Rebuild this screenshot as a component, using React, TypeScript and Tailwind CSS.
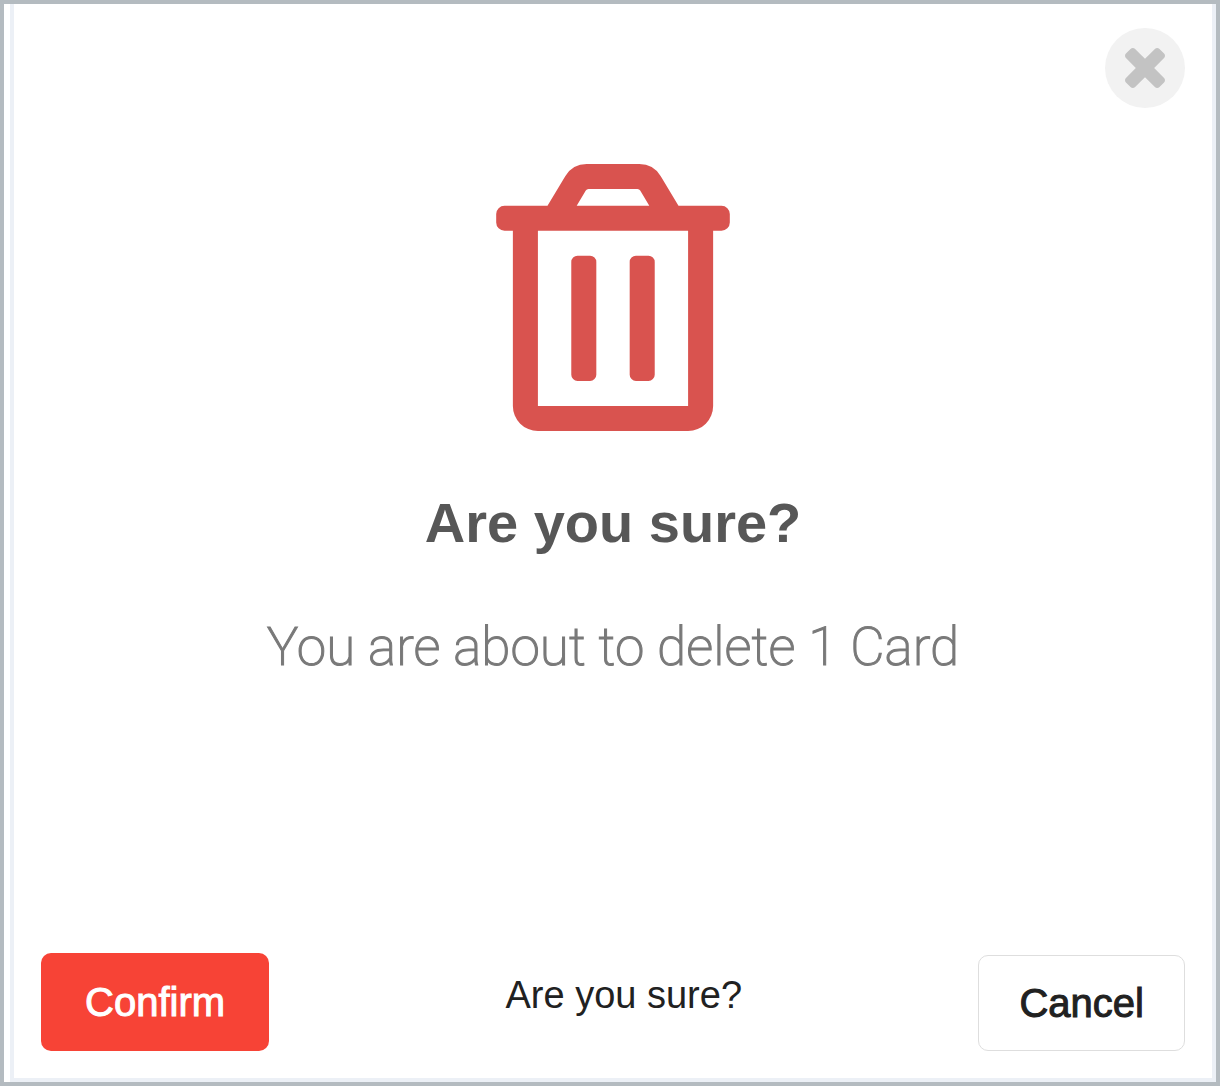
import { useState } from 'react';
import { FaRegTrashAlt } from 'react-icons/fa';

interface ConfirmDeleteProps {
  count: number;
  itemName: string;
  onConfirm: () => void;
  onCancel: () => void;
}

function CloseIcon() {
  return (
    <svg viewBox="302 366 1188 1188" className="size-10 fill-[#c3c3c3]" aria-hidden="true">
      <path d="M1490 1322q0 40-28 68l-136 136q-28 28-68 28t-68-28l-294-294-294 294q-28 28-68 28t-68-28l-136-136q-28-28-28-68t28-68l294-294-294-294q-28-28-28-68t28-68l136-136q28-28 68-28t68 28l294 294 294-294q28-28 68-28t68 28l136 136q28 28 28 68t-28 68l-294 294 294 294q28 28 28 68z" />
    </svg>
  );
}

function ConfirmDelete({ count, itemName, onConfirm, onCancel }: ConfirmDeleteProps) {
  return (
    <div
      role="dialog"
      aria-labelledby="confirm-title"
      className="flex flex-1 flex-col border-4 border-t-0 border-[#ecf0f6] bg-white px-[27px] pt-6 pb-[27px]"
    >
      <button
        type="button"
        aria-label="Close"
        onClick={onCancel}
        className="flex size-20 items-center justify-center self-end rounded-full bg-[#f2f2f2]"
      >
        <CloseIcon />
      </button>

      <div className="flex flex-1 flex-col items-center pt-14 text-center">
        <FaRegTrashAlt className="h-[267px] w-[234px] text-[#d9534f]" />
        <h1 id="confirm-title" className="mt-15 text-[56px] leading-16 font-bold text-[#575757]">
          Are you sure?
        </h1>
        <p className="mt-15 font-[Roboto,sans-serif] text-[53px] leading-16 font-extralight text-[#797979] [-webkit-text-stroke:1px]">
          You are about to delete {count} {itemName}
        </p>
      </div>

      <div className="flex items-end justify-between">
        <button
          type="button"
          onClick={onConfirm}
          className="rounded-[10px] bg-[#f74336] px-11 py-[25px] text-[40px] leading-12 text-white [-webkit-text-stroke:1px]"
        >
          Confirm
        </button>
        <p className="pb-8 text-[38px] leading-12 text-[#212121]">Are you sure?</p>
        <button
          type="button"
          onClick={onCancel}
          className="rounded-[10px] border border-[#dedede] bg-white px-10 py-[23px] text-[40px] leading-12 text-[#212121] [-webkit-text-stroke:1px]"
        >
          Cancel
        </button>
      </div>
    </div>
  );
}

export default function App() {
  const [status, setStatus] = useState<'open' | 'confirmed' | 'cancelled'>('open');

  return (
    <div className="flex min-h-screen border-4 border-[#b4bbc0] bg-white pl-[6px] font-['Liberation_Sans',Arial,sans-serif]">
      {status === 'open' && (
        <ConfirmDelete
          count={1}
          itemName="Card"
          onConfirm={() => setStatus('confirmed')}
          onCancel={() => setStatus('cancelled')}
        />
      )}
    </div>
  );
}
